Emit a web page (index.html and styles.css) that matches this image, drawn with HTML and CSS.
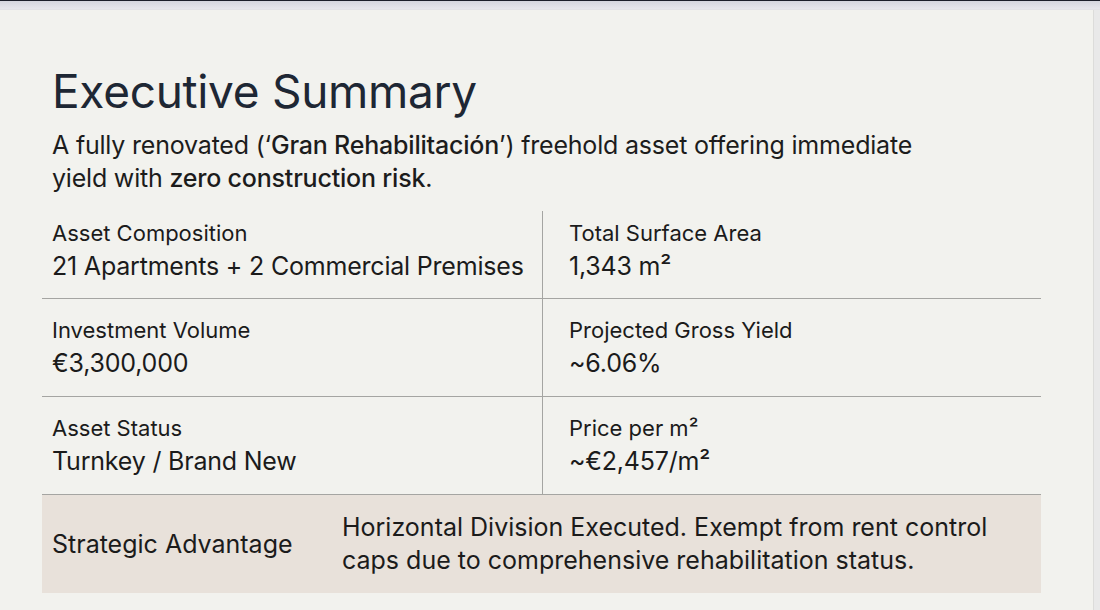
FILE: index.html
```html
<!DOCTYPE html>
<html lang="en">
<head>
<meta charset="utf-8">
<title>Executive Summary</title>
<link rel="stylesheet" href="styles.css">
</head>
<body>
<div class="topbar"></div>
<div class="frame">
  <main class="slide">
    <header class="head">
      <h1 class="title">Executive Summary</h1>
      <p class="lead">A fully renovated (‘<strong>Gran Rehabilitación</strong>’) freehold asset offering immediate<br>yield with <strong>zero construction risk</strong>.</p>
    </header>
    <section class="table">
      <div class="row">
        <div class="cell">
          <div class="label">Asset Composition</div>
          <div class="value">21 Apartments + 2 Commercial Premises</div>
        </div>
        <div class="cell cell-right">
          <div class="label">Total Surface Area</div>
          <div class="value">1,343 m²</div>
        </div>
      </div>
      <div class="row">
        <div class="cell">
          <div class="label">Investment Volume</div>
          <div class="value">€3,300,000</div>
        </div>
        <div class="cell cell-right">
          <div class="label">Projected Gross Yield</div>
          <div class="value">~6.06%</div>
        </div>
      </div>
      <div class="row">
        <div class="cell">
          <div class="label">Asset Status</div>
          <div class="value">Turnkey / Brand New</div>
        </div>
        <div class="cell cell-right">
          <div class="label">Price per m²</div>
          <div class="value">~€2,457/m²</div>
        </div>
      </div>
      <div class="advantage">
        <div class="adv-label">Strategic Advantage</div>
        <div class="adv-text">Horizontal Division Executed. Exempt from rent control<br>caps due to comprehensive rehabilitation status.</div>
      </div>
    </section>
  </main>
</div>
</body>
</html>
```
FILE: styles.css
```css
* { box-sizing: border-box; }
html, body { margin: 0; padding: 0; }
body {
  width: 1100px;
  height: 610px;
  overflow: hidden;
  background: #e9e9e9;
  font-family: Inter, "Liberation Sans", sans-serif;
  color: #1b1b1b;
}
.topbar {
  height: 10px;
  border-top: 1px solid #1b1e2a;
  background: linear-gradient(#d4d5de, #e6e6ec);
  border-bottom: 1px solid #e2e2e6;
}
.frame {
  width: 1094px;
  height: 600px;
  background: #f2f2ee;
  border-right: 1px solid #dcdcda;
}
.slide {
  padding: 0 0 0 42px;
  width: 1041px;
}
.head { padding-left: 10px; }
.title {
  margin: 0;
  padding-top: 54px;
  font-size: 46px;
  line-height: 55px;
  font-weight: 400;
  color: #1e2734;
  letter-spacing: -0.3px;
}
.lead {
  margin: 10px 0 0;
  font-size: 25px;
  line-height: 33px;
  letter-spacing: -0.2px;
  color: #1c1c1c;
}
.lead strong { font-weight: 500; }
.table { margin-top: 16px; }
.row {
  display: grid;
  grid-template-columns: 500px 1fr;
  border-bottom: 1px solid #a5a5a2;
}
.cell {
  padding: 16px 10px 15px;
}
.row:first-child .cell { padding-top: 7px; padding-bottom: 14px; }
.cell-right {
  border-left: 1px solid #a5a5a2;
  padding-left: 26px;
}
.label {
  font-size: 22px;
  line-height: 30px;
  letter-spacing: 0;
}
.value {
  font-size: 25px;
  line-height: 36px;
  letter-spacing: -0.2px;
}
.advantage {
  display: grid;
  grid-template-columns: 290px 1fr;
  align-items: center;
  height: 98px;
  background: #e8e1da;
  padding-left: 10px;
}
.adv-label {
  font-size: 25px;
  line-height: 33px;
}
.adv-text {
  font-size: 25px;
  line-height: 33px;
}
```
